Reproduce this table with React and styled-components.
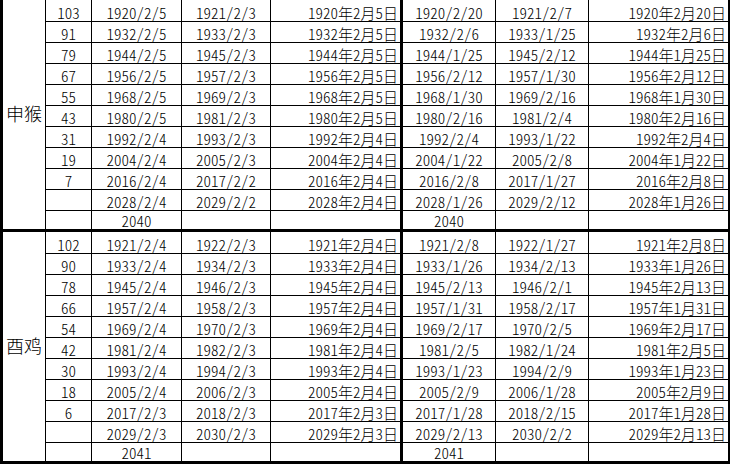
import React from 'react';
import styled, { createGlobalStyle } from 'styled-components';

const GlobalStyle = createGlobalStyle`
  html, body {
    margin: 0;
    padding: 0;
    background: #fff;
  }
`

const Sheet = styled.div`
  width: 730px;
  box-sizing: border-box;
  border-left: 3px solid #000;
  border-right: 2px solid #000;
  background: #fff;
  color: #000;
  font-family: "Noto Sans CJK SC", sans-serif;
  font-feature-settings: "hwid" 1;
  font-weight: 300;
  font-size: 15px;
`

const Section = styled.div`
  display: grid;
  grid-template-columns: 43px 46px 90px 89px 132px 93px 93px 139px;
  grid-template-rows: 22px repeat(10, 21px);
`

const Label = styled.div`
  grid-row: 1 / span 11;
  box-sizing: border-box;
  display: flex;
  align-items: center;
  justify-content: center;
  border-right: 1px solid #000;
  border-bottom: 3px solid #000;
  font-size: 18px;
  font-feature-settings: normal;
  padding-bottom: 4px;
`

const Cell = styled.div`
  box-sizing: border-box;
  display: flex;
  align-items: flex-end;
  justify-content: ${(p) => (p.$right ? 'flex-end' : 'center')};
  padding: 0 ${(p) => (p.$right ? '2px' : '0')} 0 0;
  border-bottom: ${(p) => (p.$last ? '3px' : '1px')} solid #000;
  border-right: ${(p) => (p.$edge ? '0' : p.$thick ? '3px' : '1px')} solid #000;
  line-height: 17px;
  white-space: nowrap;
`

const monkey = [
  ['103', '1920/2/5', '1921/2/3', '1920年2月5日', '1920/2/20', '1921/2/7', '1920年2月20日'],
  ['91', '1932/2/5', '1933/2/3', '1932年2月5日', '1932/2/6', '1933/1/25', '1932年2月6日'],
  ['79', '1944/2/5', '1945/2/3', '1944年2月5日', '1944/1/25', '1945/2/12', '1944年1月25日'],
  ['67', '1956/2/5', '1957/2/3', '1956年2月5日', '1956/2/12', '1957/1/30', '1956年2月12日'],
  ['55', '1968/2/5', '1969/2/3', '1968年2月5日', '1968/1/30', '1969/2/16', '1968年1月30日'],
  ['43', '1980/2/5', '1981/2/3', '1980年2月5日', '1980/2/16', '1981/2/4', '1980年2月16日'],
  ['31', '1992/2/4', '1993/2/3', '1992年2月4日', '1992/2/4', '1993/1/22', '1992年2月4日'],
  ['19', '2004/2/4', '2005/2/3', '2004年2月4日', '2004/1/22', '2005/2/8', '2004年1月22日'],
  ['7', '2016/2/4', '2017/2/2', '2016年2月4日', '2016/2/8', '2017/1/27', '2016年2月8日'],
  ['', '2028/2/4', '2029/2/2', '2028年2月4日', '2028/1/26', '2029/2/12', '2028年1月26日'],
  ['', '2040', '', '', '2040', '', ''],
]

const rooster = [
  ['102', '1921/2/4', '1922/2/3', '1921年2月4日', '1921/2/8', '1922/1/27', '1921年2月8日'],
  ['90', '1933/2/4', '1934/2/3', '1933年2月4日', '1933/1/26', '1934/2/13', '1933年1月26日'],
  ['78', '1945/2/4', '1946/2/3', '1945年2月4日', '1945/2/13', '1946/2/1', '1945年2月13日'],
  ['66', '1957/2/4', '1958/2/3', '1957年2月4日', '1957/1/31', '1958/2/17', '1957年1月31日'],
  ['54', '1969/2/4', '1970/2/3', '1969年2月4日', '1969/2/17', '1970/2/5', '1969年2月17日'],
  ['42', '1981/2/4', '1982/2/3', '1981年2月4日', '1981/2/5', '1982/1/24', '1981年2月5日'],
  ['30', '1993/2/4', '1994/2/3', '1993年2月4日', '1993/1/23', '1994/2/9', '1993年1月23日'],
  ['18', '2005/2/4', '2006/2/3', '2005年2月4日', '2005/2/9', '2006/1/28', '2005年2月9日'],
  ['6', '2017/2/3', '2018/2/3', '2017年2月3日', '2017/1/28', '2018/2/15', '2017年1月28日'],
  ['', '2029/2/3', '2030/2/3', '2029年2月3日', '2029/2/13', '2030/2/2', '2029年2月13日'],
  ['', '2041', '', '', '2041', '', ''],
]

const Block = ({ label, rows }) => (
  <Section>
    <Label>{label}</Label>
    {rows.map((row, r) =>
      row.map((value, c) => (
        <Cell
          key={`${r}_${c}`}
          $right={c === 3 || c === 6}
          $thick={c === 3}
          $edge={c === 6}
          $last={r === rows.length - 1}
        >
          {value}
        </Cell>
      ))
    )}
  </Section>
)

export default function App() {
  return (
    <>
      <GlobalStyle />
      <Sheet>
        <Block label="申猴" rows={monkey} />
        <Block label="酉鸡" rows={rooster} />
      </Sheet>
    </>
  )
}
